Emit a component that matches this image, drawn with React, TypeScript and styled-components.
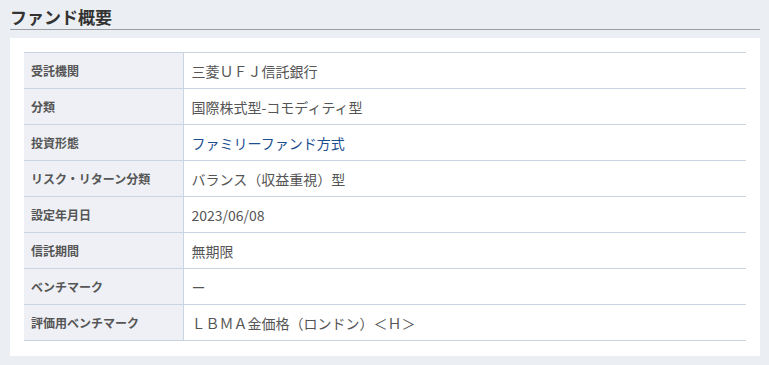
import styled, { createGlobalStyle } from 'styled-components';

const GlobalStyle = createGlobalStyle`
  html, body {
    margin: 0;
    padding: 0;
    background: #ebeef2;
  }
  body {
    font-family: "Noto Sans CJK JP", "Noto Sans", sans-serif;
  }
`;

const Page = styled.div`
  padding: 6px 9px 10px 10px;
`;

const Heading = styled.h2`
  margin: 0;
  padding: 0 0 1px;
  font-size: 17px;
  line-height: 22px;
  font-weight: 700;
  color: #333;
  border-bottom: 1px solid #9a9ea3;
`;

const Panel = styled.div`
  margin-top: 8px;
  background: #fff;
  padding: 14px 14px 15px;
`;

const Table = styled.table`
  width: 100%;
  border-collapse: collapse;
  border-top: 1px solid #c9d5e2;
`;

const Row = styled.tr`
  height: 36px;
  border-bottom: 1px solid #c9d5e2;
`;

const Label = styled.th`
  width: 159px;
  box-sizing: border-box;
  padding: 0 7px;
  text-align: left;
  background: #eef0f5;
  border-right: 1px solid #c9d5e2;
  font-size: 12px;
  font-weight: 700;
  color: #555;
`;

const Value = styled.td`
  padding: 0 8px;
  font-size: 14px;
  color: #555;
`;

const Link = styled.a`
  color: #1d4f91;
  text-decoration: none;
`;

type Item = { label: string; value: string; link?: boolean };

const items: Item[] = [
  { label: '受託機関', value: '三菱ＵＦＪ信託銀行' },
  { label: '分類', value: '国際株式型-コモディティ型' },
  { label: '投資形態', value: 'ファミリーファンド方式', link: true },
  { label: 'リスク・リターン分類', value: 'バランス（収益重視）型' },
  { label: '設定年月日', value: '2023/06/08' },
  { label: '信託期間', value: '無期限' },
  { label: 'ベンチマーク', value: 'ー' },
  { label: '評価用ベンチマーク', value: 'ＬＢＭＡ金価格（ロンドン）＜Ｈ＞' },
];

const App = () => {
  return (
    <>
      <GlobalStyle />
      <Page>
        <Heading>ファンド概要</Heading>
        <Panel>
          <Table>
            <tbody>
              {items.map((item) => (
                <Row key={item.label}>
                  <Label>{item.label}</Label>
                  <Value>
                    {item.link ? <Link href="#">{item.value}</Link> : item.value}
                  </Value>
                </Row>
              ))}
            </tbody>
          </Table>
        </Panel>
      </Page>
    </>
  );
};

export default App;
